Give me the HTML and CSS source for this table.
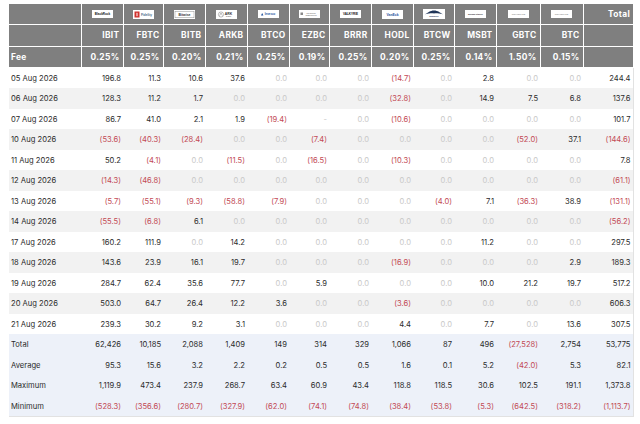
FILE: index.html
```html
<!DOCTYPE html>
<html>
<head>
<meta charset="utf-8">
<link rel="stylesheet" href="styles.css">
</head>
<body>
<div class="wrap">
<table class="flows">
<colgroup>
<col class="c-date"><col class="c42"><col class="c40"><col class="c42"><col class="c42"><col class="c42"><col class="c40"><col class="c42"><col class="c42"><col class="c41"><col class="c42"><col class="c44"><col class="c43"><col class="c50">
</colgroup>
<thead>
<tr class="r-logo">
<th></th>
<th class="lg"><svg class="logo" viewBox="0 0 21 8" width="21" height="8"><rect width="21" height="8" fill="#fff"/><text x="10.5" y="5" class="t-br">BlackRock</text></svg></th>
<th class="lg"><svg class="logo" viewBox="0 0 21 9" width="21" height="9"><rect width="21" height="9" fill="#fff"/><rect x="1.5" y="1.5" width="5" height="6" fill="#d0312d"/><rect x="3.5" y="2.8" width="1" height="3.4" fill="#fff"/><text x="13.5" y="5.6" class="t-fid">Fidelity</text></svg></th>
<th class="lg"><svg class="logo" viewBox="0 0 21 9" width="21" height="9"><rect width="21" height="9" fill="#fff"/><rect x="1" y="1.2" width="19" height="6.6" fill="none" stroke="#777" stroke-width=".4"/><text x="10.5" y="5.8" class="t-bw">Bitwise</text></svg></th>
<th class="lg"><svg class="logo" viewBox="0 0 21 9" width="21" height="9"><rect width="21" height="9" fill="#fff"/><circle cx="5" cy="4.5" r="2.6" fill="none" stroke="#555" stroke-width=".4"/><path d="M3.6 5.6 L5 3 L6.4 5.6" fill="none" stroke="#555" stroke-width=".4"/><text x="12.5" y="5" class="t-ark">ARK</text><text x="12.5" y="7.4" class="t-tiny">INVEST</text></svg></th>
<th class="lg"><svg class="logo" viewBox="0 0 21 8" width="21" height="8"><rect width="21" height="8" fill="#fff"/><path d="M3 5.4 L4.2 3 L5.4 5.4 Z" fill="#1c4f9c"/><text x="12" y="5.3" class="t-inv">Invesco</text></svg></th>
<th class="lg"><svg class="logo" viewBox="0 0 21 8" width="21" height="8"><rect width="21" height="8" fill="#fff"/><rect x="1.5" y="2.5" width="2.5" height="2.5" fill="#888"/><text x="12" y="3.8" class="t-ft">FRANKLIN</text><text x="12" y="6" class="t-ft">TEMPLETON</text></svg></th>
<th class="lg"><svg class="logo" viewBox="0 0 21 8" width="21" height="8"><rect width="21" height="8" fill="#fff"/><text x="10.5" y="5.2" class="t-val">VALKYRIE</text></svg></th>
<th class="lg"><svg class="logo" viewBox="0 0 21 9" width="21" height="9"><rect width="21" height="9" fill="#fff"/><text x="10.5" y="5.8" class="t-ve">VanEck</text></svg></th>
<th class="lg"><svg class="logo" viewBox="0 0 22 10" width="22" height="10"><rect width="22" height="10" fill="#fff"/><path d="M2 5.2 C5 3.8 7 1.4 11 1.4 C15 1.4 17 3.8 20 5.2 C16 4.6 14 4 11 4.4 C8 4 6 4.6 2 5.2 Z" fill="#1f3559"/><text x="11" y="8.4" class="t-wt">WisdomTree</text></svg></th>
<th class="lg"><svg class="logo" viewBox="0 0 21 8" width="21" height="8"><rect width="21" height="8" fill="#fff"/><text x="10.5" y="4.9" class="t-ms">Morgan Stanley</text></svg></th>
<th class="lg"><svg class="logo" viewBox="0 0 21 8" width="21" height="8"><rect width="21" height="8" fill="#fff"/><text x="10.5" y="4.9" class="t-gs">GRAYSCALE</text></svg></th>
<th class="lg"><svg class="logo" viewBox="0 0 21 8" width="21" height="8"><rect width="21" height="8" fill="#fff"/><text x="10.5" y="4.9" class="t-gs">GRAYSCALE</text></svg></th>
<th class="tot">Total</th>
</tr>
<tr class="r-tick">
<th></th><th>IBIT</th><th>FBTC</th><th>BITB</th><th>ARKB</th><th>BTCO</th><th>EZBC</th><th>BRRR</th><th>HODL</th><th>BTCW</th><th>MSBT</th><th>GBTC</th><th>BTC</th><th></th>
</tr>
<tr class="r-fee">
<th class="lab">Fee</th><th>0.25%</th><th>0.25%</th><th>0.20%</th><th>0.21%</th><th>0.25%</th><th>0.19%</th><th>0.25%</th><th>0.20%</th><th>0.25%</th><th>0.14%</th><th>1.50%</th><th>0.15%</th><th></th>
</tr>
</thead>
<tbody>
<tr><td class="d">05 Aug 2026</td><td>196.8</td><td>11.3</td><td>10.6</td><td>37.6</td><td class="z">0.0</td><td class="z">0.0</td><td class="z">0.0</td><td class="n">(14.7)</td><td class="z">0.0</td><td>2.8</td><td class="z">0.0</td><td class="z">0.0</td><td class="t">244.4</td></tr>
<tr><td class="d">06 Aug 2026</td><td>128.3</td><td>11.2</td><td>1.7</td><td class="z">0.0</td><td class="z">0.0</td><td class="z">0.0</td><td class="z">0.0</td><td class="n">(32.8)</td><td class="z">0.0</td><td>14.9</td><td>7.5</td><td>6.8</td><td class="t">137.6</td></tr>
<tr><td class="d">07 Aug 2026</td><td>86.7</td><td>41.0</td><td>2.1</td><td>1.9</td><td class="n">(19.4)</td><td class="z">-</td><td class="z">0.0</td><td class="n">(10.6)</td><td class="z">0.0</td><td class="z">0.0</td><td class="z">0.0</td><td class="z">0.0</td><td class="t">101.7</td></tr>
<tr><td class="d">10 Aug 2026</td><td class="n">(53.6)</td><td class="n">(40.3)</td><td class="n">(28.4)</td><td class="z">0.0</td><td class="z">0.0</td><td class="n">(7.4)</td><td class="z">0.0</td><td class="z">0.0</td><td class="z">0.0</td><td class="z">0.0</td><td class="n">(52.0)</td><td>37.1</td><td class="t n">(144.6)</td></tr>
<tr><td class="d">11 Aug 2026</td><td>50.2</td><td class="n">(4.1)</td><td class="z">0.0</td><td class="n">(11.5)</td><td class="z">0.0</td><td class="n">(16.5)</td><td class="z">0.0</td><td class="n">(10.3)</td><td class="z">0.0</td><td class="z">0.0</td><td class="z">0.0</td><td class="z">0.0</td><td class="t">7.8</td></tr>
<tr><td class="d">12 Aug 2026</td><td class="n">(14.3)</td><td class="n">(46.8)</td><td class="z">0.0</td><td class="z">0.0</td><td class="z">0.0</td><td class="z">0.0</td><td class="z">0.0</td><td class="z">0.0</td><td class="z">0.0</td><td class="z">0.0</td><td class="z">0.0</td><td class="z">0.0</td><td class="t n">(61.1)</td></tr>
<tr><td class="d">13 Aug 2026</td><td class="n">(5.7)</td><td class="n">(55.1)</td><td class="n">(9.3)</td><td class="n">(58.8)</td><td class="n">(7.9)</td><td class="z">0.0</td><td class="z">0.0</td><td class="z">0.0</td><td class="n">(4.0)</td><td>7.1</td><td class="n">(36.3)</td><td>38.9</td><td class="t n">(131.1)</td></tr>
<tr><td class="d">14 Aug 2026</td><td class="n">(55.5)</td><td class="n">(6.8)</td><td>6.1</td><td class="z">0.0</td><td class="z">0.0</td><td class="z">0.0</td><td class="z">0.0</td><td class="z">0.0</td><td class="z">0.0</td><td class="z">0.0</td><td class="z">0.0</td><td class="z">0.0</td><td class="t n">(56.2)</td></tr>
<tr><td class="d">17 Aug 2026</td><td>160.2</td><td>111.9</td><td class="z">0.0</td><td>14.2</td><td class="z">0.0</td><td class="z">0.0</td><td class="z">0.0</td><td class="z">0.0</td><td class="z">0.0</td><td>11.2</td><td class="z">0.0</td><td class="z">0.0</td><td class="t">297.5</td></tr>
<tr><td class="d">18 Aug 2026</td><td>143.6</td><td>23.9</td><td>16.1</td><td>19.7</td><td class="z">0.0</td><td class="z">0.0</td><td class="z">0.0</td><td class="n">(16.9)</td><td class="z">0.0</td><td class="z">0.0</td><td class="z">0.0</td><td>2.9</td><td class="t">189.3</td></tr>
<tr><td class="d">19 Aug 2026</td><td>284.7</td><td>62.4</td><td>35.6</td><td>77.7</td><td class="z">0.0</td><td>5.9</td><td class="z">0.0</td><td class="z">0.0</td><td class="z">0.0</td><td>10.0</td><td>21.2</td><td>19.7</td><td class="t">517.2</td></tr>
<tr><td class="d">20 Aug 2026</td><td>503.0</td><td>64.7</td><td>26.4</td><td>12.2</td><td>3.6</td><td class="z">0.0</td><td class="z">0.0</td><td class="n">(3.6)</td><td class="z">0.0</td><td class="z">0.0</td><td class="z">0.0</td><td class="z">0.0</td><td class="t">606.3</td></tr>
<tr><td class="d">21 Aug 2026</td><td>239.3</td><td>30.2</td><td>9.2</td><td>3.1</td><td class="z">0.0</td><td class="z">0.0</td><td class="z">0.0</td><td>4.4</td><td class="z">0.0</td><td>7.7</td><td class="z">0.0</td><td>13.6</td><td class="t">307.5</td></tr>
</tbody>
<tfoot>
<tr><td class="d">Total</td><td>62,426</td><td>10,185</td><td>2,088</td><td>1,409</td><td>149</td><td>314</td><td>329</td><td>1,066</td><td>87</td><td>496</td><td class="n">(27,528)</td><td>2,754</td><td class="t">53,775</td></tr>
<tr><td class="d">Average</td><td>95.3</td><td>15.6</td><td>3.2</td><td>2.2</td><td>0.2</td><td>0.5</td><td>0.5</td><td>1.6</td><td>0.1</td><td>5.2</td><td class="n">(42.0)</td><td>5.3</td><td class="t">82.1</td></tr>
<tr><td class="d">Maximum</td><td>1,119.9</td><td>473.4</td><td>237.9</td><td>268.7</td><td>63.4</td><td>60.9</td><td>43.4</td><td>118.8</td><td>118.5</td><td>30.6</td><td>102.5</td><td>191.1</td><td class="t">1,373.8</td></tr>
<tr class="last"><td class="d">Minimum</td><td class="n">(528.3)</td><td class="n">(356.6)</td><td class="n">(280.7)</td><td class="n">(327.9)</td><td class="n">(62.0)</td><td class="n">(74.1)</td><td class="n">(74.8)</td><td class="n">(38.4)</td><td class="n">(53.8)</td><td class="n">(5.3)</td><td class="n">(642.5)</td><td class="n">(318.2)</td><td class="t n">(1,113.7)</td></tr>
</tfoot>
</table>
</div>
</body>
</html>
```
FILE: styles.css
```css
html, body {
  margin: 0;
  padding: 0;
  background: #fff;
}
body {
  font-family: Inter, "Liberation Sans", Arial, sans-serif;
  color: #2b2b2b;
}
.wrap {
  padding: 4px 0 0 9px;
}
.flows {
  border-collapse: collapse;
  table-layout: fixed;
  width: 624px;
}
.c-date { width: 72px; }
.c40 { width: 40px; }
.c41 { width: 41px; }
.c42 { width: 42px; }
.c43 { width: 43px; }
.c44 { width: 44px; }
.c50 { width: 50px; }

.flows thead th {
  background: #7f7f7f;
  color: #fff;
  font-weight: 700;
  font-size: 8.4px;
  letter-spacing: 0.35px;
  height: 20.33px;
  padding: 0 3px 0 0;
  text-align: right;
  vertical-align: middle;
  border: 1px solid #fff;
  border-top: 0;
  white-space: nowrap;
}
.flows thead th:first-child { border-left: 0; }
.flows thead th:last-child { border-right: 0; }
.flows thead th.lab {
  text-align: left;
  padding-left: 2px;
}
.flows thead th.lg {
  text-align: center;
  padding: 0;
  line-height: 0;
}
.logo { display: inline-block; vertical-align: middle; }
.logo text { text-anchor: middle; font-family: "Liberation Sans", Arial, sans-serif; letter-spacing: 0; }
.t-br { font-size: 3px; font-weight: 700; fill: #111; }
.t-fid { font-size: 3.2px; fill: #4a6a8a; }
.t-bw { font-size: 3.4px; fill: #333; font-family: "Liberation Serif", serif; }
.t-ark { font-size: 3.4px; fill: #333; }
.t-tiny { font-size: 1.4px; fill: #666; }
.t-inv { font-size: 2.8px; fill: #1c4f9c; font-weight: 700; }
.t-ft { font-size: 1.8px; fill: #777; }
.t-val { font-size: 3px; font-weight: 700; fill: #111; }
.t-ve { font-size: 3.4px; fill: #1d4d9a; font-weight: 700; font-family: "Liberation Serif", serif; }
.t-wt { font-size: 1.6px; fill: #1f3559; }
.t-ms { font-size: 2px; fill: #333; }
.t-gs { font-size: 2.2px; fill: #888; }

.flows tbody td,
.flows tfoot td {
  font-size: 7.6px;
  height: 20.5px;
  padding: 0 2px 0 0;
  text-align: right;
  vertical-align: middle;
  white-space: nowrap;
  color: #2b2b2b;
}
.flows tbody tr:nth-child(even) td { background: #f2f2f2; }
.flows tfoot td { background: #edf1f9; }
.flows td.d {
  text-align: left;
  padding-left: 2px;
}
.flows td.t { border-right: 1px solid #e2e2e2; }
.flows tfoot tr.last td { border-bottom: 1px solid #e2e2e2; }
.flows td.z { color: #c9c9c9; }
.flows td.n { color: #c24a55; }
```
